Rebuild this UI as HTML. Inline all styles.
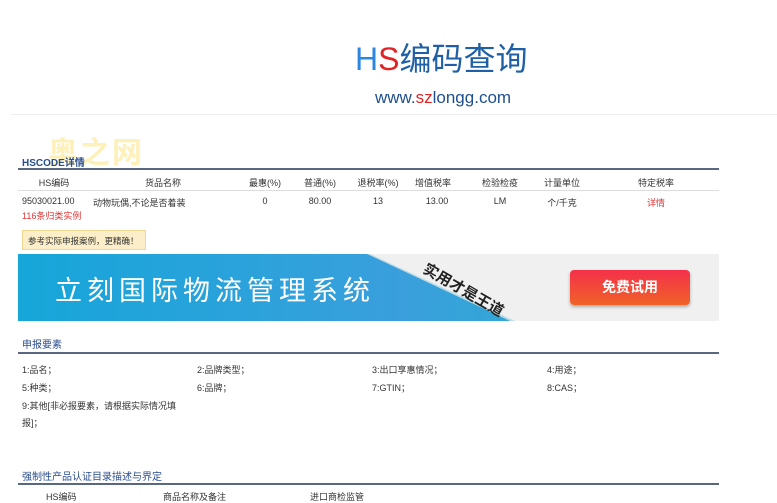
<!DOCTYPE html>
<html><head><meta charset="utf-8"><style>
*{margin:0;padding:0;box-sizing:border-box}
body{width:777px;height:500px;overflow:hidden;background:#fff;font-family:"Liberation Sans","Noto Sans CJK SC",sans-serif;position:relative;color:#333}
.a{position:absolute;white-space:nowrap}
.s{font-size:9px}
.c{transform:translateX(-50%)}
.t{color:#2a4d8f;font-size:10px;font-weight:bold}
.line{position:absolute;left:18px;width:701px;height:2px;background:#5a6780}
</style></head><body>
<div class="a" style="left:355px;top:34px;font-size:32px;color:#1f5fa6"><span style="color:#2b86e0">H</span><span style="color:#e02424">S</span>编码查询</div>
<div class="a" style="left:375px;top:88px;font-size:17px;color:#1f4f8c">www.<span style="color:#e02424">sz</span>longg.com</div>
<div class="a" style="left:11px;top:114px;width:766px;height:1px;background:#eee"></div>
<div class="a" style="left:48px;top:128px;font-size:30px;font-weight:bold;color:#fdf0b8;letter-spacing:2px">奥之网</div>
<div class="a t" style="left:22px;top:154px">HSCODE详情</div>
<div class="line" style="top:168px"></div>
<div class="a" style="left:18px;top:190px;width:701px;height:1px;background:#ddd"></div>
<div class="a s c" style="left:54px;top:176px">HS编码</div>
<div class="a s c" style="left:163px;top:176px">货品名称</div>
<div class="a s c" style="left:265px;top:176px">最惠(%)</div>
<div class="a s c" style="left:320px;top:176px">普通(%)</div>
<div class="a s c" style="left:378px;top:176px">退税率(%)</div>
<div class="a s c" style="left:433px;top:176px">增值税率</div>
<div class="a s c" style="left:500px;top:176px">检验检疫</div>
<div class="a s c" style="left:562px;top:176px">计量单位</div>
<div class="a s c" style="left:656px;top:176px">特定税率</div>
<div class="a s" style="left:22px;top:196px">95030021.00</div>
<div class="a s" style="left:22px;top:209px;color:#d33">116条归类实例</div>
<div class="a s" style="left:93px;top:196px">动物玩偶,不论是否着装</div>
<div class="a s c" style="left:265px;top:196px">0</div>
<div class="a s c" style="left:320px;top:196px">80.00</div>
<div class="a s c" style="left:378px;top:196px">13</div>
<div class="a s c" style="left:437px;top:196px">13.00</div>
<div class="a s c" style="left:500px;top:196px">LM</div>
<div class="a s c" style="left:562px;top:196px">个/千克</div>
<div class="a s c" style="left:656px;top:196px;color:#d33">详情</div>
<div class="a s" style="left:22px;top:230px;width:124px;height:20px;background:#fbeec8;border:1px solid #f0d890;padding:4px 5px;font-size:8.5px">参考实际申报案例，更精确！</div>
<div class="a" style="left:18px;top:254px;width:701px;height:67px;background:#f0f0f0;overflow:hidden">
 <div class="a" style="left:0;top:0;width:100%;height:100%;background:#b9dbe6;clip-path:polygon(0 0,352px 0,497px 100%,0 100%)"></div>
 <div class="a" style="left:0;top:0;width:100%;height:100%;background:linear-gradient(90deg,#16a6d9,#3a9fdc 55%,#22b5cc);clip-path:polygon(0 0,349px 0,492px 100%,0 100%)"></div>
 <div class="a" style="left:37px;top:15px;font-size:27px;color:#fff;letter-spacing:5px">立刻国际物流管理系统</div>
 <div class="a" style="left:412px;top:4px;font-size:15px;font-weight:bold;color:#222;transform:rotate(30deg);transform-origin:left top">实用才是王道</div>
 <div class="a" style="left:552px;top:16px;width:120px;height:35px;border-radius:4px;background:linear-gradient(#f4304a,#f06228);color:#fff;font-size:14px;font-weight:bold;text-align:center;line-height:35px;box-shadow:0 2px 3px #aaa">免费试用</div>
</div>
<div class="a t" style="left:22px;top:336px;font-weight:normal">申报要素</div>
<div class="line" style="top:352px"></div>
<div class="a s" style="left:22px;top:363px">1:品名；</div>
<div class="a s" style="left:197px;top:363px">2:品牌类型；</div>
<div class="a s" style="left:372px;top:363px">3:出口享惠情况；</div>
<div class="a s" style="left:547px;top:363px">4:用途；</div>
<div class="a s" style="left:22px;top:381px">5:种类；</div>
<div class="a s" style="left:197px;top:381px">6:品牌；</div>
<div class="a s" style="left:372px;top:381px">7:GTIN；</div>
<div class="a s" style="left:547px;top:381px">8:CAS；</div>
<div class="a s" style="left:22px;top:399px">9:其他[非必报要素，请根据实际情况填</div>
<div class="a s" style="left:22px;top:416px">报]；</div>
<div class="a t" style="left:22px;top:468px;font-weight:normal">强制性产品认证目录描述与界定</div>
<div class="line" style="top:483px"></div>
<div class="a s" style="left:46px;top:490px">HS编码</div>
<div class="a s" style="left:163px;top:490px">商品名称及备注</div>
<div class="a s" style="left:310px;top:490px">进口商检监管</div>
</body></html>
